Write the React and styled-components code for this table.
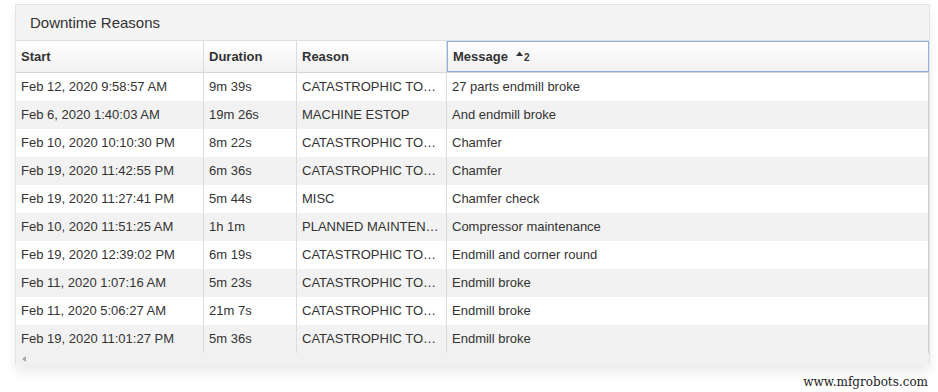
import React from 'react';
import styled, { createGlobalStyle } from 'styled-components';

const GlobalStyle = createGlobalStyle`
    body {
        margin: 0;
        background: #fff;
        font-family: "Liberation Sans", Arial, sans-serif;
    }
`

// reason text is shown already truncated, as the grid renders it
const rows = [
    ['Feb 12, 2020 9:58:57 AM', '9m 39s', 'CATASTROPHIC TO…', '27 parts endmill broke'],
    ['Feb 6, 2020 1:40:03 AM', '19m 26s', 'MACHINE ESTOP', 'And endmill broke'],
    ['Feb 10, 2020 10:10:30 PM', '8m 22s', 'CATASTROPHIC TO…', 'Chamfer'],
    ['Feb 19, 2020 11:42:55 PM', '6m 36s', 'CATASTROPHIC TO…', 'Chamfer'],
    ['Feb 19, 2020 11:27:41 PM', '5m 44s', 'MISC', 'Chamfer check'],
    ['Feb 10, 2020 11:51:25 AM', '1h 1m', 'PLANNED MAINTEN…', 'Compressor maintenance'],
    ['Feb 19, 2020 12:39:02 PM', '6m 19s', 'CATASTROPHIC TO…', 'Endmill and corner round'],
    ['Feb 11, 2020 1:07:16 AM', '5m 23s', 'CATASTROPHIC TO…', 'Endmill broke'],
    ['Feb 11, 2020 5:06:27 AM', '21m 7s', 'CATASTROPHIC TO…', 'Endmill broke'],
    ['Feb 19, 2020 11:01:27 PM', '5m 36s', 'CATASTROPHIC TO…', 'Endmill broke'],
]

const App = () => {
    return(<Page>
        <GlobalStyle />
        <Panel>
            <Title>Downtime Reasons</Title>
            <HeadRow>
                <HeadCell>Start</HeadCell>
                <HeadCell>Duration</HeadCell>
                <HeadCell>Reason</HeadCell>
                <HeadCell active>
                    Message
                    <SortMark>
                        <svg width="7" height="5" viewBox="0 0 7 5">
                            <path d="M0 5 L3.5 0.5 L7 5 Z" fill="#333" />
                        </svg>
                        <SortNum>2</SortNum>
                    </SortMark>
                </HeadCell>
            </HeadRow>
            {rows.map((r, i) => (
                <Row key={i} odd={i % 2 === 1}>
                    {r.map((c, j) => <Cell key={j}>{c}</Cell>)}
                </Row>
            ))}
            <ScrollBar>
                <svg width="4" height="6" viewBox="0 0 4 6">
                    <path d="M4 0 L0 3 L4 6 Z" fill="#aaa" />
                </svg>
            </ScrollBar>
        </Panel>
        <Watermark>www.mfgrobots.com</Watermark>
    </Page>);
}

export default App;

const Page = styled.div`
    width: 938px;
    height: 392px;
    padding: 4px 10px 0 15px;
    box-sizing: border-box;
    position: relative;
    overflow: hidden;
`

const Panel = styled.div`
    width: 913px;
    border: 1px solid #e3e3e3;
    border-bottom: none;
    background: #f3f3f3;
    box-shadow: 0 8px 10px rgba(0,0,0,0.07);
`

const Title = styled.div`
    height: 35px;
    line-height: 35px;
    padding-left: 14px;
    font-size: 15px;
    color: #333;
    background: #f4f4f4;
    border-bottom: 1px solid #dedede;
`

const cols = '188px 93px 150px 1fr'

const HeadRow = styled.div`
    display: grid;
    grid-template-columns: ${cols};
    height: 32px;
    background: linear-gradient(#ffffff, #f1f1f1);
    border-bottom: 1px solid #d6d6d6;
    box-sizing: border-box;
`

const HeadCell = styled.div`
    display: flex;
    align-items: center;
    padding: 0 5px 1px;
    font-size: 13px;
    font-weight: bold;
    color: #333;
    border: ${p => p.active ? '1px solid #8fb0dc' : 'none'};
    border-right: ${p => p.active ? '1px solid #8fb0dc' : '1px solid #dcdcdc'};
`

const SortMark = styled.span`
    display: inline-flex;
    align-items: flex-start;
    margin-left: 8px;
    margin-top: 2px;
`

const SortNum = styled.span`
    font-size: 10px;
    font-weight: bold;
    margin-left: 1px;
    margin-top: 1px;
`

const Row = styled.div`
    display: grid;
    grid-template-columns: ${cols};
    height: 28px;
    background: ${p => p.odd ? '#f2f2f2' : '#fff'};
    border-right: 1px solid #d0d0d0;
`

const Cell = styled.div`
    line-height: 28px;
    padding: 0 5px;
    font-size: 13px;
    color: #333;
    border-right: 1px solid #dcdcdc;
    white-space: nowrap;
    overflow: hidden;
    min-width: 0;
    &:last-child { border-right: none; }
`

const ScrollBar = styled.div`
    height: 12px;
    background: #f1f1f1;
    display: flex;
    align-items: center;
    padding-left: 6px;
`

const Watermark = styled.div`
    position: absolute;
    right: 10px;
    bottom: 3px;
    font-family: "DejaVu Serif", "Liberation Serif", serif;
    font-size: 12px;
    color: #222;
`
